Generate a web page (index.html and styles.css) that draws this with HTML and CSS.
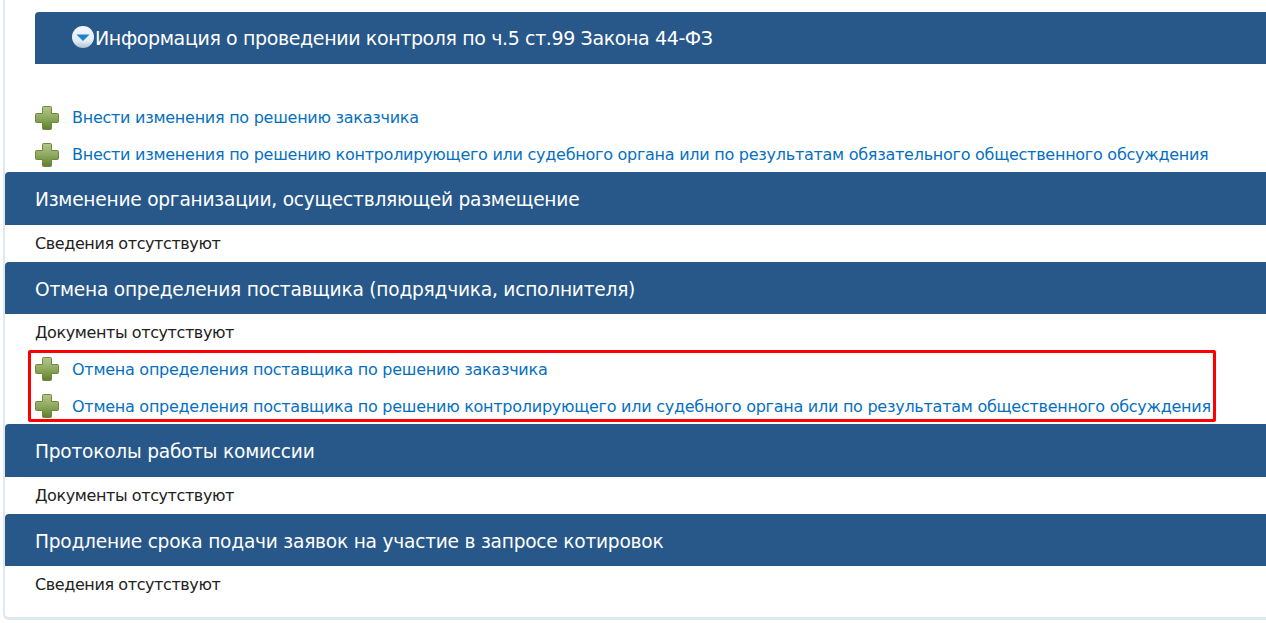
FILE: index.html
```html
<!DOCTYPE html>
<html lang="ru">
<head>
<meta charset="utf-8">
<title>Информация</title>
<link rel="stylesheet" href="styles.css">
</head>
<body>
<svg class="defs" width="0" height="0" aria-hidden="true">
  <defs>
    <linearGradient id="plusFill" x1="0" y1="0" x2="0" y2="1">
      <stop offset="0" stop-color="#b4c68a"/>
      <stop offset="0.5" stop-color="#8fa95f"/>
      <stop offset="1" stop-color="#5d8029"/>
    </linearGradient>
    <linearGradient id="toggleFill" x1="0" y1="0" x2="0" y2="1">
      <stop offset="0" stop-color="#f4f8fb"/>
      <stop offset="0.7" stop-color="#e2ebf3"/>
      <stop offset="1" stop-color="#aebfd0"/>
    </linearGradient>
    <symbol id="plus" viewBox="0 0 26 26">
      <path d="M9.5 1.5h7a1 1 0 0 1 1 1v6h6a1 1 0 0 1 1 1v7a1 1 0 0 1-1 1h-6v6a1 1 0 0 1-1 1h-7a1 1 0 0 1-1-1v-6h-6a1 1 0 0 1-1-1v-7a1 1 0 0 1 1-1h6v-6a1 1 0 0 1 1-1z" fill="url(#plusFill)" stroke="#6b8a3f" stroke-width="1"/>
    </symbol>
  </defs>
</svg>
<main class="panel">
  <h2 class="bar bar-info">
    <svg class="toggle" viewBox="0 0 22 22" aria-hidden="true">
      <circle cx="11" cy="11" r="11" fill="url(#toggleFill)"/>
      <path d="M4.5 8.5h13L11 15z" fill="#1f7fd0"/>
    </svg>
    <span>Информация о проведении контроля по ч.5 ст.99 Закона 44-ФЗ</span>
  </h2>
  <div class="links links-first">
    <a class="link-row" href="#"><svg class="plus"><use href="#plus"/></svg><span>Внести изменения по решению заказчика</span></a>
    <a class="link-row" href="#"><svg class="plus"><use href="#plus"/></svg><span>Внести изменения по решению контролирующего или судебного органа или по результатам обязательного общественного обсуждения</span></a>
  </div>
  <h2 class="bar bar-section">Изменение организации, осуществляющей размещение</h2>
  <p class="note">Сведения отсутствуют</p>
  <h2 class="bar bar-section">Отмена определения поставщика (подрядчика, исполнителя)</h2>
  <p class="note">Документы отсутствуют</p>
  <div class="links highlighted">
    <a class="link-row" href="#"><svg class="plus"><use href="#plus"/></svg><span>Отмена определения поставщика по решению заказчика</span></a>
    <a class="link-row" href="#"><svg class="plus"><use href="#plus"/></svg><span>Отмена определения поставщика по решению контролирующего или судебного органа или по результатам общественного обсуждения</span></a>
  </div>
  <h2 class="bar bar-section">Протоколы работы комиссии</h2>
  <p class="note">Документы отсутствуют</p>
  <h2 class="bar bar-section">Продление срока подачи заявок на участие в запросе котировок</h2>
  <p class="note">Сведения отсутствуют</p>
</main>
</body>
</html>
```
FILE: styles.css
```css
html, body {
  margin: 0;
  padding: 0;
  height: 623px;
  overflow: hidden;
  background: #fff;
}
body {
  font-family: "DejaVu Sans", "Noto Sans", sans-serif;
  color: #222;
}
.defs { display: block; height: 0; }
.panel {
  box-sizing: border-box;
  width: 1280px;
  height: 620px;
  margin-left: 3px;
  padding-top: 12px;
  border-left: 2px solid #dfe8ee;
  border-bottom: 3px solid #dfe8ee;
  border-bottom-left-radius: 6px;
}
.bar {
  margin: 0;
  display: flex;
  align-items: center;
  background: #285889;
  color: #fff;
  font-weight: 400;
  font-size: 18.6px;
  letter-spacing: -0.23px;
  white-space: nowrap;
  border-top-left-radius: 4px;
}
.bar-info {
  height: 52px;
  margin-left: 30px;
  padding-left: 37px;
  box-sizing: border-box;
  font-size: 19px;
  letter-spacing: -0.38px;
}
.toggle { width: 22px; height: 22px; flex: none; margin: -3px 1px 0 0; }
.bar-section {
  height: 52.5px;
  padding: 3px 0 0 30px;
  box-sizing: border-box;
}
.links { display: flex; flex-direction: column; }
.links-first { padding-top: 35px; margin-bottom: -1px; }
.link-row {
  display: flex;
  align-items: center;
  box-sizing: border-box;
  height: 37px;
  padding-left: 29px;
  color: #0670c0;
  text-decoration: none;
  font-size: 16px;
  letter-spacing: -0.26px;
  white-space: nowrap;
}
.plus { width: 26px; height: 26px; flex: none; margin-right: 12px; }
.note {
  margin: 0;
  height: 37px;
  line-height: 37px;
  padding-left: 30px;
  font-size: 16px;
  letter-spacing: -0.4px;
}
.highlighted { position: relative; margin-top: -1px; }
.highlighted .link-row { padding-top: 1px; }
.highlighted::after {
  content: "";
  position: absolute;
  left: 23px;
  top: 0;
  width: 1188px;
  height: 72px;
  border: 3px solid #f00;
  border-radius: 2px;
  box-sizing: border-box;
  pointer-events: none;
}
```
